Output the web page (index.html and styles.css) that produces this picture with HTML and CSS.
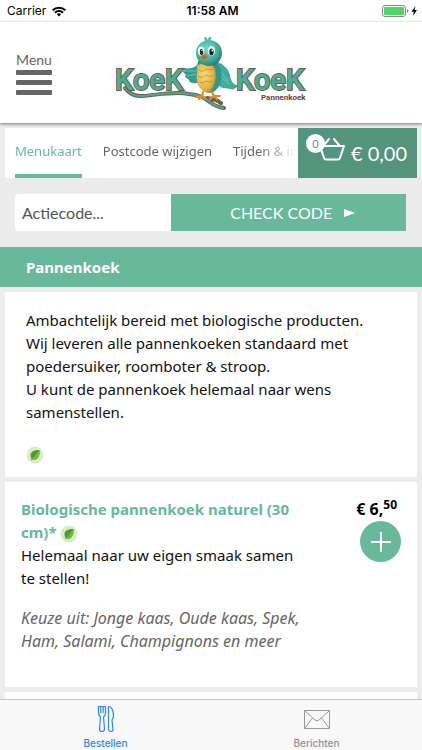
FILE: index.html
```html
<!DOCTYPE html>
<html lang="nl">
<head>
	<meta charset="UTF-8">
	<meta name="viewport" content="width=device-width, initial-scale=1">
	<title>KoeK KoeK Pannenkoek</title>
	<link rel="stylesheet" href="styles.css">
</head>
<body>
	<div class="statusbar">
		<div class="carrier">
			<span>Carrier</span>
			<svg width="14" height="11" viewBox="0 0 14 11" fill="none" stroke="#000" stroke-width="2">
				<path d="M.7 4.2a9 9 0 0 1 12.6 0M3 6.7a5.7 5.7 0 0 1 8 0"/>
				<path d="M7 10.5 4.9 8.3a3 3 0 0 1 4.2 0z" fill="#000" stroke="none"/>
			</svg>
		</div>
		<div class="time">11:58 AM</div>
		<div class="battery">
			<svg width="36" height="12" viewBox="0 0 36 12">
				<rect x=".5" y=".5" width="23" height="11" rx="2.5" fill="#fff" stroke="#8a8a8a"/>
				<rect x="2" y="2" width="20" height="8" rx="1" fill="#4cd964"/>
				<path d="M25 4v4q1.500-.5 1.500-2T25 4z" fill="#8a8a8a"/>
				<path d="M33.500 1 29.500 6.700h2.300L30.800 11l4.200-6h-2.500z"/>
			</svg>
		</div>
	</div>

	<header class="header">
		<button class="menu" type="button">
			<span class="menu-text">Menu</span>
			<span class="bar"></span>
			<span class="bar"></span>
			<span class="bar"></span>
		</button>
		<a class="logo" href="#" aria-label="KoeK KoeK Pannenkoek">
			<svg width="194" height="76" viewBox="114 36 194 76">
				<defs>
					<radialGradient id="head" cx=".4" cy=".35" r=".7">
						<stop offset="0" stop-color="#7ad8c5"/>
						<stop offset=".6" stop-color="#43b3a1"/>
						<stop offset="1" stop-color="#23796e"/>
					</radialGradient>
					<radialGradient id="belly" cx=".4" cy=".4" r=".7">
						<stop offset="0" stop-color="#f8dc79"/>
						<stop offset=".7" stop-color="#e0b044"/>
						<stop offset="1" stop-color="#a97b27"/>
					</radialGradient>
				</defs>
				<!-- branch -->
				<g fill="none" stroke-linecap="round">
					<path d="M125 88q7 9 17 8c15-1 32-5 47-2 10 1 14 3 21 8q6 5 14 6M207 98q9 1 14 5" stroke="#765c43" stroke-width="4"/>
					<path d="M125 88q7 9 17 8c15-1 32-5 47-2 10 1 14 3 21 8q6 5 13 6" stroke="#45aa96" stroke-width="2"/>
				</g>
				<!-- words -->
				<g class="logo-word">
					<text x="115" y="90">KoeK</text>
					<text x="236" y="90">KoeK</text>
				</g>
				<text class="logo-sub" x="261" y="100">Pannenkoek</text>
				<!-- bird -->
				<path d="M199 64q-7 7-17 4l5 4-4-1q2 4 5 4l-3 1q3 4 6 4l-2 1q7 5 13-2z" fill="#349f91" stroke="#267e73" stroke-width=".6"/>
				<path d="M217 62q12 5 13 16 2 7 8 8l-5 3-12-2-6-7z" fill="#3eae9e" stroke="#267e73" stroke-width=".6"/>
				<path d="M220 71l8 10M220 76l9 8M186 71l11 0M187 76l9-2" stroke="#82d6c7" fill="none" stroke-width=".7"/>
				<path d="M198 61c8-5 20-2 23 9 2 12-2 20-10 23-10 0-15-10-15-19z" fill="#2f968a"/>
				<path d="M197 66c5-5 16-4 18 3 2 9 0 18-6 24-9-1-14-12-12-20z" fill="url(#belly)"/>
				<path d="M199 70q4 3 7-1 3 2 7 0M198 76q4 3 8-1 4 3 8 0M200 82q3 2 6-1 3 2 7 0" fill="none" stroke="#b68528" stroke-width=".7"/>
				<path d="M206 42q-3-4-1-5 2 0 3 4 0-5 3-4 1 2-2 5" fill="#50bbaa"/>
				<ellipse cx="209" cy="53" rx="13" ry="13" fill="url(#head)"/>
				<ellipse cx="201" cy="51" rx="3" ry="4.500" fill="#fff"/>
				<ellipse cx="211.500" cy="51" rx="3.500" ry="5" fill="#fff"/>
				<ellipse cx="201.500" cy="52" rx="1.700" ry="3" fill="#152a2c"/>
				<ellipse cx="211.500" cy="52" rx="2.200" ry="3.500" fill="#152a2c"/>
				<circle cx="202" cy="50.500" r=".7" fill="#fff"/>
				<circle cx="212.300" cy="50.500" r=".9" fill="#fff"/>
				<path d="M201 56q3-4 7 0l-4 5z" fill="#e66d27"/>
				<path d="M202 57q2 1 5 0" fill="none" stroke="#963c15" stroke-width=".7"/>
				<path d="M203 92l-1 4-6 1m6-1-3 3m3-3 3 2M212 92l2 4-4 3m4-3 3 3m-3-3 6 0" fill="none" stroke="#df8d2c" stroke-width="2.200" stroke-linecap="round"/>
			</svg>
		</a>
	</header>

	<main class="content">
		<div class="topnav">
			<nav class="tabs">
				<a class="active" href="#">Menukaart</a>
				<a href="#">Postcode wijzigen</a>
				<a href="#">Tijden &amp; info</a>
			</nav>
			<button class="cart" type="button">
				<span class="basket">
					<svg width="28" height="24" viewBox="0 0 28 24" fill="none" stroke="#fff" stroke-width="2" stroke-linejoin="round" stroke-linecap="round">
						<path d="M2 9h24l-4 12q-.5 1.500-2 1.500H8q-1.500 0-2-1.500z"/>
						<path d="m6 8 5-6M21 8l-5-6"/>
					</svg>
					<span class="count">0</span>
				</span>
				<span>€ 0,00</span>
			</button>
		</div>

		<form class="promo">
			<input type="text" placeholder="Actiecode..." aria-label="Actiecode">
			<button type="button">CHECK CODE
				<svg width="11" height="8" viewBox="0 0 11 8"><path d="M0 0l11 4L0 8z" fill="#fff"/></svg>
			</button>
		</form>

		<h2 class="category">Pannenkoek</h2>

		<section class="card intro">
			<p>Ambachtelijk bereid met biologische producten.<br>
			Wij leveren alle pannenkoeken standaard met poedersuiker, roomboter &amp; stroop.<br>
			U kunt de pannenkoek helemaal naar wens samenstellen.</p>
			<svg class="leaf" viewBox="0 0 18 18">
				<circle cx="9" cy="9" r="8.500" fill="#d9edc4"/>
				<path d="M13.500 4C8 4 4.500 5.500 4.500 9.500q0 2 1 3L5 14.500l1.500-1c5 1 7.500-3 7-9.500z" fill="#4e9a34"/>
				<path d="M13.500 4 5.500 14l1-.5c5 1 7.500-3 7-9.500z" fill="#74b845"/>
			</svg>
		</section>

		<article class="card product">
			<div class="info">
				<h3>Biologische pannenkoek naturel (30 cm)*
					<svg class="leaf" viewBox="0 0 18 18">
						<circle cx="9" cy="9" r="8.500" fill="#d9edc4"/>
						<path d="M13.500 4C8 4 4.500 5.500 4.500 9.500q0 2 1 3L5 14.500l1.500-1c5 1 7.500-3 7-9.500z" fill="#4e9a34"/>
						<path d="M13.500 4 5.500 14l1-.5c5 1 7.500-3 7-9.500z" fill="#74b845"/>
					</svg>
				</h3>
				<p>Helemaal naar uw eigen smaak samen te stellen!</p>
				<p class="choice">Keuze uit: Jonge kaas, Oude kaas, Spek, Ham, Salami, Champignons en meer</p>
			</div>
			<div class="order">
				<div class="price">€ 6,<sup>50</sup></div>
				<button class="add" type="button" aria-label="Toevoegen">
					<svg width="20" height="20" viewBox="0 0 20 20" stroke="#fff" stroke-width="2"><path d="M10 0v20M0 10h20"/></svg>
				</button>
			</div>
		</article>

		<article class="card product"></article>
	</main>

	<nav class="tabbar">
		<a class="current" href="#">
			<svg width="18" height="28" viewBox="0 0 18 28" fill="none" stroke="#2f86f0" stroke-width="1.200" stroke-linejoin="round">
				<path d="M1.500 1.500h7V8q0 3-2 4l1 12.500q-.2 2-2.500 2t-2.500-2L3.500 12q-2-1-2-4z"/>
				<path d="M3.800 2v6M6.200 2v6"/>
				<path d="M11.500 1.500c3 0 5 4 5 9 0 3-1.500 3.500-1.500 5l1 9q0 2-2 2t-2.500-2z"/>
			</svg>
			<span>Bestellen</span>
		</a>
		<a href="#">
			<svg width="26" height="28" viewBox="0 0 26 28" fill="none" stroke="#999">
				<path d="M.5 5.500h25v18H.5zM.5 5.500 11 15q2 1.500 4 0L25.500 5.500M.5 23.500l8-10.500M25.500 23.500l-8-10.500"/>
			</svg>
			<span>Berichten</span>
		</a>
	</nav>
</body>
</html>
```

FILE: styles.css
```css
*{
	margin: 0;
	padding: 0;
	box-sizing: border-box;
}
body{
	display: flex;
	flex-direction: column;
	height: 100vh;
	background: #ececec;
	color: #111;
	font-family: "Noto Sans", sans-serif;
	font-size: 15px;
	line-height: 23px;
}
a{
	color: inherit;
	text-decoration: none;
}
button{
	border: 0;
	font: inherit;
	color: #fff;
	cursor: pointer;
}
svg{
	display: block;
	flex-shrink: 0;
}

/* status bar */
.statusbar{
	display: grid;
	grid-template-columns: 1fr auto 1fr;
	align-items: center;
	height: 22px;
	padding: 0 4px 0 7px;
	background: #fff;
	color: #000;
	font-family: Inter, sans-serif;
	font-size: 12px;
	line-height: 22px;
}
.carrier{
	display: flex;
	align-items: center;
	gap: 6px;
}
.time{
	font-weight: 600;
}
.battery{
	justify-self: end;
}

/* header */
.header{
	display: grid;
	grid-template-columns: 1fr auto 1fr;
	flex-shrink: 0;
	height: 101px;
	padding: 0 16px;
	background: #fff;
	box-shadow: 0 1px 3px rgba(0, 0, 0, .5);
	z-index: 2;
}
.menu{
	justify-self: start;
	align-self: start;
	width: 36px;
	padding-top: 27px;
	background: none;
	color: #666;
	font-family: Lato, sans-serif;
	font-size: 14px;
	line-height: 21px;
}
.menu-text{
	display: block;
}
.bar{
	display: block;
	height: 5px;
	margin-bottom: 5px;
	border-radius: 1px;
	background: #666;
}
.logo{
	padding-top: 14px;
}
.logo-word{
	font-family: Roboto, sans-serif;
	font-size: 29px;
	font-weight: 500;
	fill: #48ae99;
	stroke: #765c43;
	stroke-width: 2px;
	paint-order: stroke;
}
.logo-sub{
	font-family: Roboto, sans-serif;
	font-size: 8px;
	font-weight: 700;
	fill: #68462f;
}

/* content */
.content{
	flex: 1;
	min-height: 0;
	overflow-y: auto;
	scrollbar-width: none;
}
.topnav{
	display: flex;
	height: 50px;
	margin: 5px 5px 0;
	background: #fff;
}
.tabs{
	display: flex;
	flex: 1;
	gap: 21px;
	min-width: 0;
	padding-left: 10px;
	overflow: hidden;
	color: #666;
	font-size: 13px;
	line-height: 46px;
	white-space: nowrap;
	-webkit-mask-image: linear-gradient(to right, #000 calc(100% - 40px), transparent);
	mask-image: linear-gradient(to right, #000 calc(100% - 40px), transparent);
}
.tabs a{
	height: 50px;
}
.tabs .active{
	color: #68b99b;
	border-bottom: 4px solid #68b99b;
}
.cart{
	display: flex;
	align-items: center;
	justify-content: flex-end;
	gap: 5px;
	width: 119px;
	padding-right: 10px;
	background: #53957c;
	font-family: Lato, sans-serif;
	font-size: 20px;
}
.basket{
	position: relative;
	padding-bottom: 8px;
}
.count{
	position: absolute;
	top: -3px;
	left: -12px;
	width: 19px;
	height: 19px;
	border-radius: 50%;
	background: #fff;
	color: #53957c;
	font-size: 11px;
	line-height: 19px;
	text-align: center;
}
.promo{
	display: flex;
	height: 37px;
	margin: 16px 16px 16px 15px;
	font-family: Lato, sans-serif;
	font-size: 16px;
}
.promo input{
	width: 40%;
	padding: 0 7px;
	border: 0;
	border-radius: 4px 0 0 4px;
	background: #fff;
	color: #555;
	font: inherit;
}
.promo input::placeholder{
	color: #555;
	opacity: 1;
}
.promo button{
	display: flex;
	flex: 1;
	align-items: center;
	justify-content: center;
	gap: 12px;
	padding-left: 8px;
	background: #68b99b;
}
.category{
	padding: 0 26px;
	background: #68b99b;
	color: #fff;
	font-size: 15px;
	line-height: 40px;
}
.card{
	margin: 5px;
	background: #fff;
}
.leaf{
	width: 18px;
	height: 18px;
}
.intro{
	padding: 17px 20px 13px 21px;
}
.intro .leaf{
	margin-top: 22px;
}
.product{
	display: flex;
	justify-content: space-between;
	min-height: 205px;
	padding: 16px;
}
.info{
	width: 76%;
}
.info h3{
	color: #68b99b;
	font-size: 15px;
}
.info h3 .leaf{
	display: inline-block;
	vertical-align: middle;
}
.choice{
	margin-top: 17px;
	color: #666;
	font-size: 16px;
	font-style: italic;
}
.order{
	display: flex;
	flex-direction: column;
	align-items: flex-end;
}
.price{
	margin-right: 4px;
	color: #000;
	font-size: 16px;
	font-weight: 700;
}
.price sup{
	font-size: 12px;
	line-height: 0;
}
.add{
	display: flex;
	align-items: center;
	justify-content: center;
	width: 41px;
	height: 41px;
	border-radius: 50%;
	background: #68b99b;
}

/* bottom bar */
.tabbar{
	display: flex;
	flex-shrink: 0;
	height: 51px;
	padding-top: 5px;
	border-top: 1px solid #c8c8c8;
	background: #f8f8f8;
	color: #929292;
	font-family: Inter, sans-serif;
	font-size: 10px;
	font-weight: 500;
	line-height: 14px;
}
.tabbar a{
	display: flex;
	flex: 1;
	flex-direction: column;
	align-items: center;
	gap: 3px;
}
.tabbar .current{
	color: #2f86f0;
}
```
